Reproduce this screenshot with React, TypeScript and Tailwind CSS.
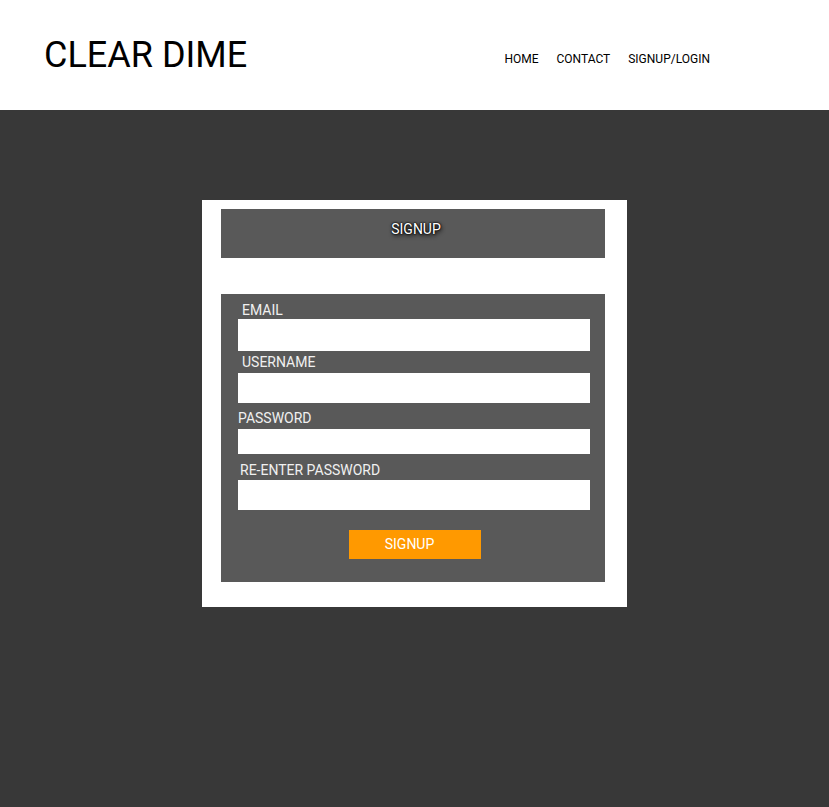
const fields = [
  { label: 'EMAIL', labelCls: 'mt-0 pl-[4px]', inputCls: 'mt-[1px] h-[32px]' },
  { label: 'USERNAME', labelCls: 'mt-[3px] pl-[4px]', inputCls: 'mt-[3px] h-[30px]' },
  { label: 'PASSWORD', labelCls: 'mt-[7px] pl-0', inputCls: 'mt-[3px] h-[25px]' },
  { label: 'RE-ENTER PASSWORD', labelCls: 'mt-[8px] pl-[2px]', inputCls: 'mt-[2px] h-[30px]' },
];

export default function App() {
  return (
    <div className="min-h-[807px] bg-[#383838] font-['Roboto',sans-serif]">
      {/* Header */}
      <header className="h-[110px] bg-white flex items-start justify-between">
        <h1 className="ml-[44px] mt-[35px] text-[36px] leading-[40px] text-black font-normal">
          CLEAR DIME
        </h1>
        <nav className="mr-[119px] mt-[51px] flex gap-[18px] text-[12px] leading-[16px] text-black">
          <a href="#">HOME</a>
          <a href="#">CONTACT</a>
          <a href="#">SIGNUP/LOGIN</a>
        </nav>
      </header>

      {/* Card */}
      <div className="mx-auto mt-[90px] w-[425px] bg-white pt-[9px] pb-[25px] pl-[19px] pr-[22px]">
        <div className="h-[49px] bg-[#595959] pt-[12px] pl-[6px] text-center text-[14px] leading-[16px] text-white [text-shadow:0_0_2px_#000,0_0_2px_#000,1px_2px_4px_#000]">
          SIGNUP
        </div>

        <form className="mt-[36px] h-[288px] bg-[#595959] pt-[8px] pl-[17px] pr-[15px]">
          {fields.map((f) => (
            <div key={f.label}>
              <label className={`block text-[14px] leading-[16px] text-[#f0f0f0] ${f.labelCls}`}>
                {f.label}
              </label>
              <input className={`block w-full bg-white outline-none ${f.inputCls}`} />
            </div>
          ))}
          <div className="mt-[20px] flex justify-center pl-[1px]">
            <button
              type="button"
              className="w-[132px] h-[29px] bg-[#ff9900] pr-[10px] text-[14px] text-white"
            >
              SIGNUP
            </button>
          </div>
        </form>
      </div>
    </div>
  );
}
